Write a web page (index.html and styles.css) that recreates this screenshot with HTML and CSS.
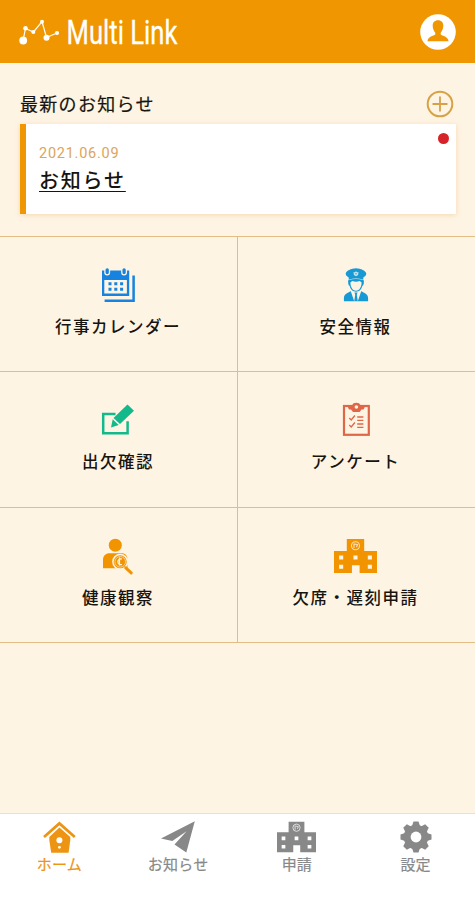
FILE: index.html
```html
<!DOCTYPE html>
<html lang="ja">
<head>
<meta charset="utf-8">
<meta name="viewport" content="width=device-width, initial-scale=1">
<title>Multi Link</title>
<link rel="stylesheet" href="styles.css">
</head>
<body>
<svg width="0" height="0" class="defs" aria-hidden="true">
  <symbol id="building" viewBox="0 0 42 33">
    <path fill="currentColor" fill-rule="evenodd" d="M12.500 0h17v11.500H42V33H25v-7.500h-7.500V33H0V11.500h12.500zM5 16v4h4v-4zM5 25v4h4v-4zM19 16v4h4v-4zM33 16v4h4v-4zM33 25v4h4v-4z"/>
    <circle class="ring" cx="21" cy="6.500" r="3.900"/>
    <path class="ring" d="M19.500 4.200v4.500M20 4.800l3 .5-1 2.500"/>
  </symbol>
</svg>
<div class="app">
  <header class="header">
    <svg class="logo" width="166" height="46" viewBox="18 9 166 46">
      <path d="M23 40.500L25.500 28.500L33.500 32L42 21.500L46.500 37.500L57 33" fill="none" stroke="#fff" stroke-width="1.200"/>
      <g fill="#fff"><circle cx="23.200" cy="40.500" r="3.900"/><circle cx="25.500" cy="28.300" r="2.300"/><circle cx="33.300" cy="32" r="2"/><circle cx="42" cy="21.700" r="2"/><circle cx="46.500" cy="37.700" r="3"/><circle cx="57" cy="33" r="2.100"/></g>
      <text class="logo-text" x="66.500" y="43.500" textLength="111" lengthAdjust="spacingAndGlyphs">Multi Link</text>
    </svg>
    <svg width="36" height="36" viewBox="0 0 36 36">
      <circle cx="18" cy="18" r="17.800" fill="#fff"/>
      <path fill="#f09600" d="M18 6.200c3.500 0 5.300 2.300 5.300 5.300 0 3-1 5.500-2.600 7.200v1.700c1.500 1.300 7.800 2 7.800 6.900h-21c0-4.900 6.300-5.600 7.800-6.900v-1.700c-1.600-1.700-2.600-4.200-2.600-7.200 0-3 1.800-5.300 5.300-5.300z"/>
    </svg>
  </header>
  <section class="news">
    <div class="news-head">
      <h1>最新のお知らせ</h1>
      <svg width="28" height="28" viewBox="0 0 28 28" fill="none" stroke="#d7a145">
        <circle cx="14" cy="14" r="12.300" stroke-width="2"/><path d="M14 6.500v15M6.500 14h15" stroke-width="1.800"/>
      </svg>
    </div>
    <article class="card">
      <time>2021.06.09</time>
      <a>お知らせ</a>
      <i class="dot"></i>
    </article>
  </section>
  <main class="grid">
    <div class="cell">
      <svg width="34" height="34" viewBox="101 268 34 34" fill="none">
        <path d="M133.600 275.500v25.300h-29" stroke="#1583df" stroke-width="2.500"/>
        <path fill="#1583df" fill-rule="evenodd" d="M102 270.500h27.200V296H102zM104.300 280v13.600h22.600V280z"/>
        <g fill="#1583df" stroke="#fef4e4" stroke-width="1.300"><rect x="104.900" y="267.500" width="4.600" height="7.400" rx="2.300"/><rect x="121.800" y="267.500" width="4.600" height="7.400" rx="2.300"/></g>
        <path d="M108.500 283.800h15.500M108.500 289.200h15.500" stroke="#1583df" stroke-width="3" stroke-dasharray="3 2.800"/>
      </svg>
      <span>行事カレンダー</span>
    </div>
    <div class="cell">
      <svg width="34" height="34" viewBox="339 268 34 34">
        <g fill="#1699d5">
          <path d="M356 268.200c4.500 0 10.300 2.800 10.300 5.500 0 2-1.800 2.600-3 3.800v2.200c-4.500-1.600-10.100-1.600-14.600 0v-2.200c-1.200-1.200-3-1.800-3-3.800 0-2.700 5.800-5.500 10.300-5.500z"/>
          <path fill-rule="evenodd" d="M348.200 280.200q7.800-2.300 15.600 0c.3 2.500 0 5-1.500 5.800-.7 3-2.700 5.700-6.300 5.700s-5.600-2.700-6.300-5.700c-1.500-.8-1.800-3.300-1.500-5.800zM350.400 282.500c0 4 1.800 8.200 5.600 8.200s5.600-4.200 5.600-8.200l-1.800-1.500q-3.800 1.600-7.600 0z"/>
          <path d="M350.800 291.300l3.400 9.900h-10.300v-3c0-4.500 4-5.200 6.900-6.900zM361.200 291.300l-3.400 9.900h10.300v-3c0-4.500-4-5.200-6.900-6.900zM354.500 292.600h3l-.7 2.200 1 6.400h-3.600l1-6.400z"/>
        </g>
        <path d="M353.500 272l2.500 1 2.500-1-.4 3-2.100 1.300-2.100-1.300z" fill="#c8e4ed"/><circle cx="356" cy="273" r="1.600" fill="#c8e4ed"/><circle cx="356" cy="273.800" r=".7" fill="#1699d5"/>
      </svg>
      <span>安全情報</span>
    </div>
    <div class="cell">
      <svg width="34" height="34" viewBox="101 404 34 34">
        <path d="M115.500 414.900h-12.300v19.400h24.400v-12" fill="none" stroke="#14b98b" stroke-width="2.500"/>
        <path fill="#14b98b" d="M127.500 405.500l6.500 6.200-14 13.300-6.500-6zM112.700 420.200l6 5.700-7.700 2.500z"/>
      </svg>
      <span>出欠確認</span>
    </div>
    <div class="cell">
      <svg width="34" height="34" viewBox="339 404 34 34">
        <rect x="344" y="407" width="24.800" height="28.800" fill="none" stroke="#df6748" stroke-width="2.200"/>
        <path fill="#df6748" d="M347 406.200h5q1-2.400 4.300-2.400t4.300 2.400h5l-2 4.300h-2l-2 2.400h-6.600l-2-2.400h-2z"/>
        <circle cx="356.400" cy="408" r="1.800" fill="#fef4e4"/>
        <path fill="none" stroke="#df6748" stroke-width="1.300" d="M349.300 419l1.900 2 3.700-4.500M349.300 426l1.900 2 3.700-4.500M357.200 418h6.200M357.200 421.300h6.200M357.200 425h6.200M357.200 428.300h6.200"/>
      </svg>
      <span>アンケート</span>
    </div>
    <div class="cell">
      <svg width="34" height="34" viewBox="101 538.500 34 34">
        <circle cx="115.300" cy="544.700" r="6.500" fill="#f29300"/>
        <path fill="#f29300" d="M103 567.800v-8.300c0-4.500 3-6.700 6.500-6.700h12c4 0 6 2.700 6 6.700v8.300z"/>
        <circle cx="120.200" cy="561.300" r="7.300" fill="#f29300" stroke="#fef4e4" stroke-width="1.500"/>
        <circle cx="120.200" cy="561.300" r="5.300" fill="none" stroke="#fbd08a" stroke-width="1"/>
        <path d="M122 558.500c-5.500-1.500-5.500 7 0 5.500M119.500 557v8" fill="none" stroke="#fef4e4" stroke-width="1.200"/>
        <path d="M125.800 567.300l5.400 5.100" stroke="#f29300" stroke-width="3" stroke-linecap="round"/>
      </svg>
      <span>健康観察</span>
    </div>
    <div class="cell">
      <svg class="school" width="43" height="34"><use href="#building"/></svg>
      <span>欠席・遅刻申請</span>
    </div>
  </main>
  <nav class="nav">
    <div class="tab active">
      <svg width="34" height="32" viewBox="42 821 34 32">
        <path d="M44 837l15.400-13.600L74.800 837" fill="none" stroke="#ed9413" stroke-width="2.700"/>
        <path d="M59.400 827.500L70.300 837v3l-1.700 12.800H51.200L49.300 840v-3z" fill="#ed9413"/>
        <circle cx="59.400" cy="840.200" r="3" fill="#fff"/><circle cx="59.400" cy="847.300" r="1.400" fill="#fff"/>
      </svg>
      <span>ホーム</span>
    </div>
    <div class="tab">
      <svg width="34" height="32" viewBox="162 821 34 32"><path fill="#888" d="M195.800 821.300L162 838.500l11.300 2.500 14.300-9.800-12.100 13.200 11.800 8.100z"/></svg>
      <span>お知らせ</span>
    </div>
    <div class="tab">
      <svg class="office" width="39" height="32"><use href="#building"/></svg>
      <span>申請</span>
    </div>
    <div class="tab">
      <svg width="34" height="32" viewBox="-17 -16 34 32">
        <g fill="#888"><g id="teeth"><path d="M-4-11L-2.500-15.500h5L4-11V11L2.500 15.500h-5L-4 11z"/><path d="M-4-11L-2.500-15.500h5L4-11V11L2.500 15.500h-5L-4 11z" transform="rotate(90)"/></g><use href="#teeth" transform="rotate(45)"/><circle r="12.300"/></g><circle r="5.400" fill="#fff"/>
      </svg>
      <span>設定</span>
    </div>
  </nav>
</div>
</body>
</html>
```
FILE: styles.css
```css
* { box-sizing: border-box; }
body {
  margin: 0;
  background: #fef4e4;
  color: #17140f;
  font-family: "Noto Sans CJK JP", "Noto Sans", sans-serif;
}
.defs { display: none; }
svg { display: block; flex: none; overflow: visible; }
.app { display: flex; flex-direction: column; height: 900px; }
.header {
  display: flex;
  align-items: center;
  justify-content: space-between;
  height: 63px;
  padding: 0 19px 0 18px;
  background: #f09600;
}
.logo-text { font-family: Roboto, sans-serif; font-size: 32.5px; fill: #fff; stroke: #fff; stroke-width: .3px; }
.news { height: 173px; padding: 27px 19px 0 20px; }
.news-head { display: flex; align-items: center; justify-content: space-between; height: 28px; padding-right: 2px; }
.news-head h1 { margin: -3px 0 0; font-size: 18px; font-weight: 400; line-height: 28px; letter-spacing: 1.3px; -webkit-text-stroke: .2px; }
.card {
  position: relative;
  display: flex;
  flex-direction: column;
  align-items: flex-start;
  height: 90px;
  margin-top: 6px;
  padding: 20px 13px;
  background: #fff;
  border-left: 6px solid #f09600;
  box-shadow: 0 1px 5px rgba(220, 165, 80, .35);
}
.card time { font-family: Roboto, sans-serif; font-size: 14.5px; line-height: 20px; letter-spacing: .75px; color: #dba55b; }
.card a { margin-top: 1px; font-size: 20px; line-height: 30px; letter-spacing: 1.8px; font-weight: 500; text-decoration: underline; text-decoration-thickness: 1px; text-underline-offset: 3px; }
.dot { position: absolute; top: 9px; right: 7px; width: 11px; height: 11px; border-radius: 50%; background: #d52329; }
.grid { display: grid; grid-template-columns: 238px 1fr; grid-template-rows: 135px 136px 135px; border-top: 1px solid #e3bd83; }
.cell {
  display: flex;
  flex-direction: column;
  align-items: center;
  padding: 31px 2px 0 0;
  border-bottom: 1px solid #e3bd83;
}
.cell:nth-child(odd) { padding-right: 1px; border-right: 1px solid #e3bd83; }
.cell svg { height: 34px; }
.cell span { margin-top: 12px; font-size: 16.5px; font-weight: 500; line-height: 24px; letter-spacing: 1.5px; white-space: nowrap; }
.school { color: #f29300; }
.office { color: #888; }
.ring { fill: none; stroke: #fff; stroke-opacity: .75; stroke-width: 1; }
.nav { display: flex; height: 87px; margin-top: auto; padding-top: 7px; background: #fff; border-top: 1px solid #e2e2df; }
.tab { flex: 1; display: flex; flex-direction: column; align-items: center; color: #888; }
.tab span { font-size: 15px; line-height: 22px; letter-spacing: .2px; -webkit-text-stroke: .2px; }
.tab.active { color: #ed9413; }
```
